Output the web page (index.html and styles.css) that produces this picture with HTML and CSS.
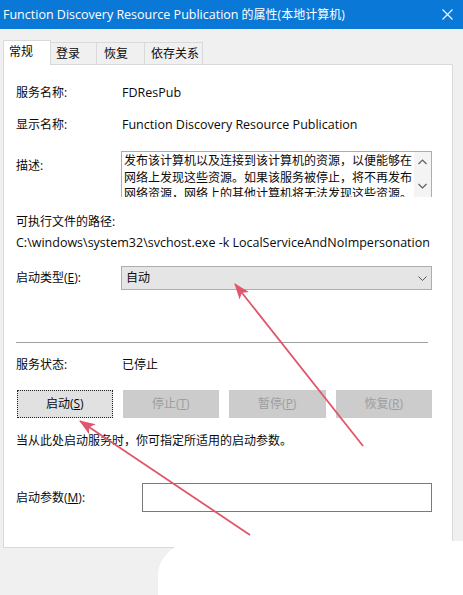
FILE: index.html
```html
<!DOCTYPE html>
<html lang="zh-CN">
<head>
<meta charset="utf-8">
<title>Function Discovery Resource Publication 的属性(本地计算机)</title>
<link rel="stylesheet" href="styles.css">
</head>
<body>
<div class="titlebar">
  <span class="title"><span class="lt">Function Discovery Resource Publication</span> 的属性(本地计算机)</span>
  <svg class="close" width="11" height="11" viewBox="0 0 11 11"><path d="M0.5 0.5 L10.5 10.5 M10.5 0.5 L0.5 10.5" stroke="#fff" stroke-width="1.1" fill="none"/></svg>
</div>
<div class="tabs">
  <div class="tab tab-active t1">常规</div>
  <div class="tab t2">登录</div>
  <div class="tab t3">恢复</div>
  <div class="tab t4">依存关系</div>
</div>
<div class="panel">
  <div class="row r1"><span class="label">服务名称:</span><span class="value latin">FDResPub</span></div>
  <div class="row r2"><span class="label">显示名称:</span><span class="value latin">Function Discovery Resource Publication</span></div>
  <div class="row r3">
    <span class="label label-top">描述:</span>
    <div class="desc">
      <div class="desc-text">
        <div>发布该计算机以及连接到该计算机的资源，以便能够在</div>
        <div>网络上发现这些资源。如果该服务被停止，将不再发布</div>
        <div>网络资源，网络上的其他计算机将无法发现这些资源。</div>
      </div>
      <div class="scroll">
        <svg width="9" height="6" viewBox="0 0 9 6"><path d="M0.5 5 L4.5 1 L8.5 5" stroke="#606060" stroke-width="1.2" fill="none"/></svg>
        <svg width="9" height="6" viewBox="0 0 9 6"><path d="M0.5 1 L4.5 5 L8.5 1" stroke="#606060" stroke-width="1.2" fill="none"/></svg>
      </div>
    </div>
  </div>
  <div class="row r4"><span>可执行文件的路径:</span></div>
  <div class="row r5"><span class="latin">C:\windows\system32\svchost.exe -k LocalServiceAndNoImpersonation</span></div>
  <div class="row r6">
    <span class="label">启动类型(<u>E</u>):</span>
    <div class="combo">
      <span>自动</span>
      <svg width="9" height="5" viewBox="0 0 9 5"><path d="M0.5 0.5 L4.5 4.5 L8.5 0.5" stroke="#555" stroke-width="1" fill="none"/></svg>
    </div>
  </div>
  <div class="sep"></div>
  <div class="row r7"><span class="label">服务状态:</span><span class="value">已停止</span></div>
  <div class="buttons">
    <div class="btn btn-focus">启动(<u>S</u>)</div>
    <div class="btn btn-disabled">停止(<u>T</u>)</div>
    <div class="btn btn-disabled">暂停(<u>P</u>)</div>
    <div class="btn btn-disabled">恢复(<u>R</u>)</div>
  </div>
  <div class="row r9"><span>当从此处启动服务时，你可指定所适用的启动参数。</span></div>
  <div class="row r10">
    <span class="label label-wide">启动参数(<u>M</u>):</span>
    <div class="input"></div>
  </div>
</div>
<div class="blob"></div>
<svg class="arrows" width="463" height="595" viewBox="0 0 463 595">
  <defs>
    <marker id="head" markerUnits="userSpaceOnUse" markerWidth="18" markerHeight="14" refX="15" refY="6" orient="auto">
      <path d="M0 0 L16 6 L0 12 L4 6 Z" fill="#e0566c"/>
    </marker>
  </defs>
  <line x1="363" y1="446" x2="235" y2="284" stroke="#e0566c" stroke-width="1.8" marker-end="url(#head)"/>
  <line x1="250" y1="535" x2="80" y2="421" stroke="#e0566c" stroke-width="1.8" marker-end="url(#head)"/>
</svg>
</body>
</html>
```
FILE: styles.css
```css
* { box-sizing: border-box; }
body {
  margin: 0;
  width: 463px;
  height: 595px;
  background: #f0f0f0;
  font-family: "Open Sans", "Noto Sans CJK SC", sans-serif;
  font-size: 12px;
  color: #0a0a0a;
  position: relative;
  overflow: hidden;
}
u { text-decoration: underline; text-underline-offset: 1px; }
.latin { font-size: 12.5px; }
.titlebar {
  height: 29px;
  background: #0a78d6;
  color: #fff;
  display: flex;
  align-items: center;
  justify-content: space-between;
  padding: 0 10px 0 3px;
}
.title { font-size: 12px; line-height: 16px; }
.title .lt { font-size: 12.5px; }
.close { display: block; }
.tabs {
  display: flex;
  margin-top: 11px;
  padding-left: 3px;
  height: 24px;
  align-items: flex-end;
  position: relative;
  z-index: 1;
}
.tab {
  height: 22px;
  border: 1px solid #d9d9d9;
  border-bottom: none;
  border-left: none;
  background: #f0f0f0;
  line-height: 21px;
  padding-left: 6px;
}
.tab-active {
  height: 25px;
  background: #fff;
  border-left: 1px solid #d9d9d9;
  margin-bottom: -1px;
  line-height: 22px;
  padding-left: 5px;
}
.t1 { width: 48px; }
.t2 { width: 46px; padding-left: 5px; }
.t3 { width: 48px; padding-left: 7px; }
.t4 { width: 58px; padding-left: 6px; }
.panel {
  margin: 0 10px 0 3px;
  height: 484px;
  background: #fff;
  border: 1px solid #d9d9d9;
  padding: 0 20px 0 12px;
  display: flex;
  flex-direction: column;
}
.row {
  display: flex;
  align-items: center;
  height: 20px;
  line-height: 18px;
  white-space: nowrap;
}
.label { width: 105px; flex: none; }
.label-wide { width: 126px; }
.value { padding-left: 1px; }
.r1 { margin-top: 18px; }
.r2 { margin-top: 12px; }
.r3 { margin-top: 16px; height: 46px; align-items: flex-start; }
.label-top { padding-top: 6px; }
.desc {
  flex: 1;
  height: 46px;
  border: 1px solid #abadb3;
  border-bottom: none;
  display: flex;
  overflow: hidden;
}
.desc-text {
  flex: 1;
  padding: 1px 0 0 2px;
  line-height: 16.5px;
  overflow: hidden;
}
.scroll {
  width: 17px;
  background: #f4f4f4;
  display: flex;
  flex-direction: column;
  align-items: center;
  justify-content: space-between;
  padding: 7px 0 8px;
}
.scroll svg { display: block; }
.r4 { margin-top: 15px; }
.r5 { margin-top: 1px; }
.r6 { margin-top: 13px; height: 24px; }
.combo {
  flex: 1;
  height: 24px;
  background: #e5e5e5;
  border: 1px solid #adadad;
  display: flex;
  align-items: center;
  justify-content: space-between;
  padding: 0 4px 0 4px;
}
.combo svg { display: block; margin-right: 0; }
.sep {
  margin-top: 52px;
  height: 1px;
  background: #a0a0a0;
  margin-right: 4px;
  flex: none;
}
.r7 { margin-top: 12px; }
.buttons {
  margin-top: 15px;
  display: grid;
  grid-template-columns: repeat(4, 1fr);
  column-gap: 10px;
  height: 28px;
  flex: none;
}
.btn {
  display: flex;
  align-items: center;
  justify-content: center;
  height: 28px;
  line-height: 18px;
}
.btn-focus {
  background: #e1e1e1;
  border: 1px dotted #222;
  margin-left: 1px;
}
.btn-disabled {
  background: #cccccc;
  color: #9d9d9d;
}
.r9 { margin-top: 13px; }
.r10 { margin-top: 32px; height: 29px; }
.input {
  flex: 1;
  height: 29px;
  border: 1px solid #7a7a7a;
  background: #fff;
}
.blob {
  position: absolute;
  left: 158px;
  top: 541px;
  right: -20px;
  bottom: -20px;
  background: #fff;
  border-top-left-radius: 40px 34px;
}
.arrows {
  position: absolute;
  left: 0;
  top: 0;
  pointer-events: none;
}
```
